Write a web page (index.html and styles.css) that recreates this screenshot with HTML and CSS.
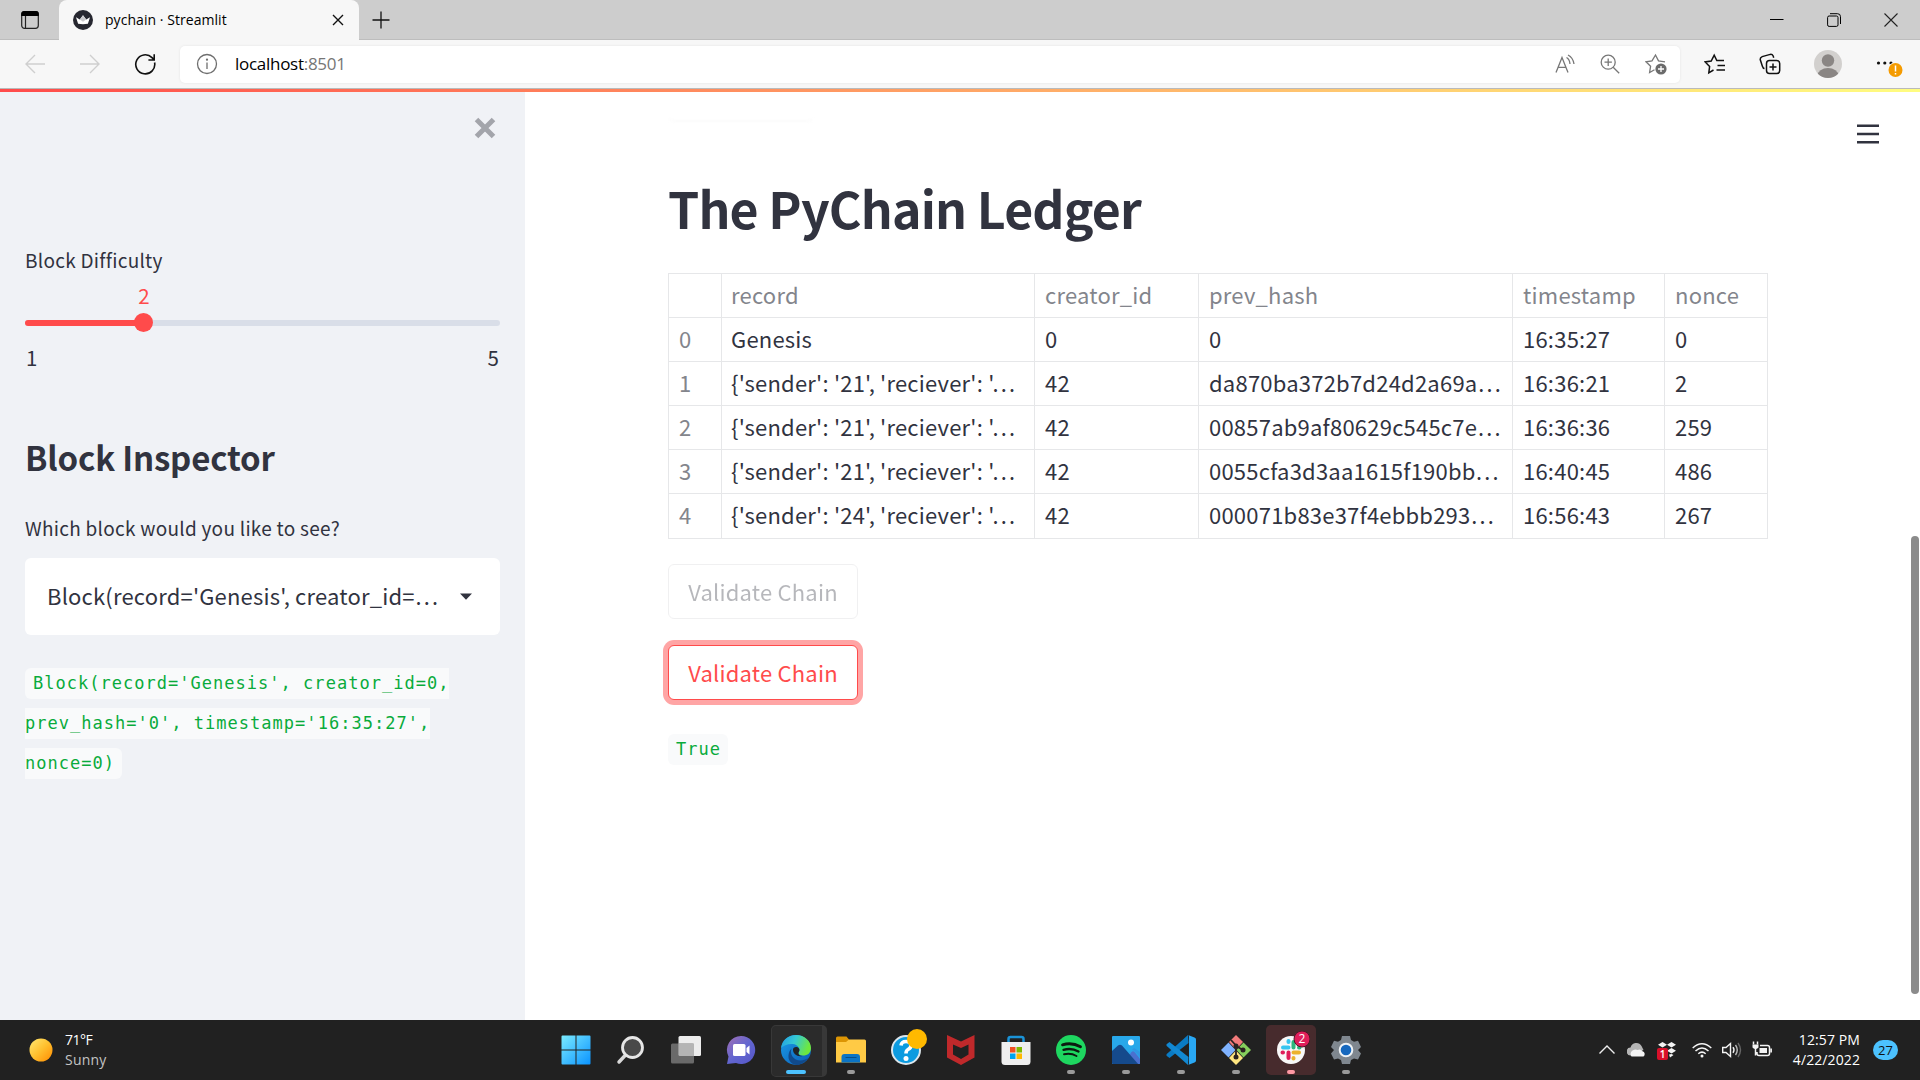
FILE: index.html
```html
<!DOCTYPE html>
<html lang="en">
<head>
<meta charset="utf-8">
<title>pychain · Streamlit</title>
<link rel="stylesheet" href="styles.css">
</head>
<body>
<header class="tabstrip">
  <svg class="tab-actions" width="20" height="20" viewBox="0 0 20 20"><rect x="1.7" y="1.7" width="16.6" height="16.6" rx="2.8" fill="none" stroke="#222" stroke-width="1.2"/><path d="M1.2 6V4a3 3 0 0 1 3-3h11.6a3 3 0 0 1 3 3v2z" fill="#000"/><path d="M5.5 6v12" stroke="#222" stroke-width="1.2"/></svg>
  <div class="tab">
    <svg width="20" height="20" viewBox="0 0 20 20"><circle cx="10" cy="10" r="10" fill="#262730"/><path d="M3 7.2l3.8 2.3L10 5.2l3.200 4.300L17 7.200l-2.100 6.600q-4.900.8-9.800 0z" fill="#fff"/><path d="M6.800 9.500L10 5.200l3.200 4.300-3.200 2.300z" fill="#c9c9cc"/></svg>
    <span class="tab-title">pychain · Streamlit</span>
    <svg width="12" height="12" viewBox="0 0 12 12"><path d="M1 1l10 10M11 1L1 11" stroke="#111" stroke-width="1.4"/></svg>
  </div>
  <svg class="new-tab" width="18" height="18" viewBox="0 0 18 18"><path d="M9 .5v17M.5 9h17" stroke="#111" stroke-width="1.3"/></svg>
  <div class="window-buttons">
    <svg width="14" height="14" viewBox="0 0 14 14"><path d="M0 6.500h13.500" stroke="#000"/></svg>
    <svg width="14" height="14" viewBox="0 0 14 14" fill="none" stroke="#000"><rect x=".6" y="3" width="10.400" height="10.400" rx="1.500"/><path d="M3 .7h7.500a3 3 0 0 1 3 3V11"/></svg>
    <svg width="14" height="14" viewBox="0 0 14 14"><path d="M.5.5l13 13M13.500.5l-13 13" stroke="#222" stroke-width="1.1"/></svg>
  </div>
</header>
<div class="toolbar">
  <div class="nav">
    <svg width="20" height="20" viewBox="0 0 20 20" fill="none" stroke="#cfcfcf" stroke-width="1.400"><path d="M20 10H1M10 1L1 10l9 9"/></svg>
    <svg width="20" height="20" viewBox="0 0 20 20" fill="none" stroke="#cfcfcf" stroke-width="1.400"><path d="M0 10h19M10 1l9 9-9 9"/></svg>
    <svg width="22" height="22" viewBox="0 0 22 22" fill="none" stroke="#111" stroke-width="1.600"><path d="M20.600 9.500A9.500 9.500 0 1 1 18 4.600l2 2M20.200 1.200v5.800h-5.800"/></svg>
  </div>
  <div class="address">
    <svg width="22" height="22" viewBox="0 0 22 22" fill="none" stroke="#6e6e6e" stroke-width="1.300"><circle cx="11" cy="11" r="9.500"/><path d="M11 9.500V16"/><circle cx="11" cy="6.700" r=".5"/></svg>
    <span class="url">localhost<span class="port">:8501</span></span>
    <div class="address-icons">
      <svg width="20" height="20" viewBox="0 0 20 20" fill="none" stroke="#777" stroke-width="1.300"><path d="M1 18.500L7 3.500l6 15M3.100 13.300h7.800M11.500 3.500q3 1.500 3.500 6.500M13 1q5 2.500 6 9"/></svg>
      <svg width="20" height="20" viewBox="0 0 20 20" fill="none" stroke="#777" stroke-width="1.300"><circle cx="8.200" cy="8.200" r="7"/><path d="M13.200 13.200l6 6M8.200 4.500v7.400M4.500 8.200h7.400"/></svg>
      <svg width="22" height="22" viewBox="0 0 22 22" fill="none" stroke="#777" stroke-width="1.300"><path d="M9.500 16.800L4.600 19.500l1-6.300L1 8.800l6-.9L10.500 2l3 5.900 6.500 1"/><circle cx="16" cy="16" r="5.600" fill="#6b6b6b" stroke="none"/><path d="M16 13v6M13 16h6" stroke="#fff"/></svg>
    </div>
  </div>
  <div class="browser-icons">
    <svg width="22" height="22" viewBox="0 0 22 22" fill="none" stroke="#111" stroke-width="1.500"><path d="M9.500 17L4.800 19.800l.8-6.300L1.200 8.900l6-.9L10.200 2.200l2.600 5.400H20M13.500 12.500H21M12.500 17H21"/></svg>
    <svg width="22" height="22" viewBox="0 0 22 22" fill="none" stroke="#111" stroke-width="1.500"><rect x="7.500" y="7.500" width="13.200" height="13" rx="3"/><path d="M14 10.500v7M10.500 14h7M5.500 15.500Q4 15.500 3.300 13L1.200 6.500Q1 4.500 3.200 3.600l8-2.200q2-.4 3 1.600l.5 1.800"/></svg>
    <svg width="28" height="28" viewBox="0 0 28 28"><defs><clipPath id="av"><circle cx="14" cy="14" r="14"/></clipPath></defs><circle cx="14" cy="14" r="14" fill="#d2d0ce"/><g clip-path="url(#av)" fill="#8a8684"><circle cx="14" cy="10.500" r="6.200"/><ellipse cx="14" cy="25.500" rx="10.500" ry="7.500"/></g></svg>
    <svg width="28" height="28" viewBox="0 0 28 28"><g fill="#111"><circle cx="2.500" cy="13" r="1.600"/><circle cx="8.800" cy="13" r="1.600"/><circle cx="15" cy="13" r="1.600"/></g><circle cx="19.500" cy="20" r="7.800" fill="#f7f7f7"/><circle cx="19.500" cy="20" r="7" fill="#f59b00"/><path d="M19.500 15.500v6M19.500 23v1.500" stroke="#fff" stroke-width="1.500"/></svg>
  </div>
</div>
<div class="page">
  <div class="decoration"></div>
  <aside class="sidebar">
    <svg class="sidebar-close" width="22" height="22" viewBox="0 0 22 22"><path d="M2.500 2.500l17 17M19.500 2.500l-17 17" stroke="#a3a5ab" stroke-width="5"/></svg>
    <label class="label slider-label">Block Difficulty</label>
    <div class="slider">
      <div class="slider-value">2</div>
      <div class="track"><div class="fill"></div><div class="thumb"></div></div>
      <div class="ticks"><span>1</span><span>5</span></div>
    </div>
    <h2>Block Inspector</h2>
    <label class="label">Which block would you like to see?</label>
    <div class="select"><span>Block(record='Genesis', creator_id=…</span><svg width="12" height="7" viewBox="0 0 12 7"><path d="M0 .5h12L6 6.800z" fill="#31333f"/></svg></div>
    <p class="code-block"><code>Block(record='Genesis', creator_id=0,<br>prev_hash='0', timestamp='16:35:27',<br>nonce=0)</code></p>
  </aside>
  <main class="main">
    <div class="ghost"></div>
    <svg class="menu" width="22" height="20" viewBox="0 0 22 20"><path d="M0 1.700h22M0 10h22M0 18.300h22" stroke="#31333f" stroke-width="2.500"/></svg>
    <h1>The PyChain Ledger</h1>
    <div class="ledger">
      <div class="row head"><span></span><span>record</span><span>creator_id</span><span>prev_hash</span><span>timestamp</span><span>nonce</span></div>
      <div class="row"><span>0</span><span>Genesis</span><span>0</span><span>0</span><span>16:35:27</span><span>0</span></div>
      <div class="row"><span>1</span><span>{'sender': '21', 'reciever': '…</span><span>42</span><span>da870ba372b7d24d2a69a…</span><span>16:36:21</span><span>2</span></div>
      <div class="row"><span>2</span><span>{'sender': '21', 'reciever': '…</span><span>42</span><span>00857ab9af80629c545c7e…</span><span>16:36:36</span><span>259</span></div>
      <div class="row"><span>3</span><span>{'sender': '21', 'reciever': '…</span><span>42</span><span>0055cfa3d3aa1615f190bb…</span><span>16:40:45</span><span>486</span></div>
      <div class="row"><span>4</span><span>{'sender': '24', 'reciever': '…</span><span>42</span><span>000071b83e37f4ebbb293…</span><span>16:56:43</span><span>267</span></div>
    </div>
    <button class="button stale">Validate Chain</button>
    <button class="button focused">Validate Chain</button>
    <p class="code-block result"><code>True</code></p>
    <div class="scrollbar"></div>
  </main>
</div>
<footer class="taskbar">
  <div class="weather">
    <svg width="24" height="24" viewBox="0 0 24 24"><defs><linearGradient id="sun" x1="0" y1="0" x2="1" y2="1"><stop offset="0" stop-color="#ffe873"/><stop offset=".5" stop-color="#ffc02e"/><stop offset="1" stop-color="#ff8a00"/></linearGradient></defs><circle cx="12" cy="12" r="11.500" fill="url(#sun)"/></svg>
    <div><div class="temp">71°F</div><div class="dim">Sunny</div></div>
  </div>
  <div class="apps">
    <div class="app"><svg width="30" height="30" viewBox="0 0 30 30"><defs><linearGradient id="win" x1="0" y1="0" x2="1" y2="1"><stop offset="0" stop-color="#7bebff"/><stop offset="1" stop-color="#0a93ff"/></linearGradient></defs><path d="M.5 1.500a1 1 0 0 1 1-1h13v14H.5zM15.500.5h13a1 1 0 0 1 1 1v13h-14zM.5 15.500h14v14h-13a1 1 0 0 1-1-1zM15.500 15.500h14v13a1 1 0 0 1-1 1h-13z" fill="url(#win)"/></svg></div>
    <div class="app"><svg width="30" height="30" viewBox="0 0 30 30"><path d="M3 27l7-7.500" stroke="#d8d8d8" stroke-width="3.500" stroke-linecap="round"/><circle cx="16.500" cy="12.500" r="10" fill="#494949" stroke="#e6e6e6" stroke-width="2.800"/></svg></div>
    <div class="app"><svg width="30" height="30" viewBox="0 0 30 30"><rect x="7.500" y="1" width="22.500" height="20" rx="1.500" fill="#ececec"/><rect x="0" y="8.500" width="23" height="20" rx="1.500" fill="#777" fill-opacity=".85"/><path d="M7.500 8.500H23V21H9a1.500 1.500 0 0 1-1.500-1.500z" fill="#b4b4b4"/></svg></div>
    <div class="app"><svg width="30" height="30" viewBox="0 0 30 30"><defs><linearGradient id="chat" x1="0" y1="0" x2="1" y2="1"><stop offset="0" stop-color="#a26fb4"/><stop offset=".5" stop-color="#6266d0"/><stop offset="1" stop-color="#5555c8"/></linearGradient></defs><path d="M15 1a14 14 0 1 1-5 27L1 29l1.500-7.500A14 14 0 0 1 15 1z" fill="url(#chat)"/><rect x="7" y="9" width="12.500" height="12" rx="1.500" fill="#fff"/><path d="M20.500 13l3-2.500v9l-3-2.500z" fill="#fff"/></svg></div>
    <div class="app edge"><svg width="30" height="30" viewBox="0 0 30 30"><defs><linearGradient id="e1" x1="0" y1="0" x2="1" y2=".3"><stop offset="0" stop-color="#219be4"/><stop offset=".5" stop-color="#35c9d4"/><stop offset="1" stop-color="#6ee83e"/></linearGradient><linearGradient id="e2" x1="0" y1="0" x2="1" y2="1"><stop offset="0" stop-color="#1b9de8"/><stop offset="1" stop-color="#0b5bb5"/></linearGradient></defs><circle cx="15" cy="15" r="15" fill="url(#e2)"/><path d="M0 13C1 5 7.500 0 15 0c8.500 0 15 6 15 13 0 5-3.500 7.500-8 7.500-3.500 0-5-1.500-4.500-3 .8-1 1-2 1-3C18 11 14.500 9 10.500 9 6 9 2 11 0 13z" fill="url(#e1)"/><path d="M10.500 13.500c-2 6 2 12 9 12 3 0 5.500-1 7.500-2.500-3 4.500-7.500 7-12 7-5-1-8-5-7.500-9.500.3-3 1.200-5.200 3-7z" fill="#114a8b"/><path d="M12 14.500c0 4.500 4 7.500 9.500 6.500-2.800 0-4.500-1.500-4-3.500 1.500-2 1.200-4-.5-5-2.500-1-5 0-5 2z" fill="#202427"/></svg><b></b></div>
    <div class="app"><svg width="30" height="30" viewBox="0 0 30 30"><path d="M0 3a1.500 1.500 0 0 1 1.500-1.500h9L13 4.500V9H0z" fill="#dc9504"/><path d="M0 7h10l3-2.500h15.500A1.500 1.500 0 0 1 30 6v21.500H0z" fill="#ffca45"/><path d="M5.500 27.500V22a3 3 0 0 1 3-3h12.500a3 3 0 0 1 3 3v5.500z" fill="#0b74c5"/><path d="M9.500 22.500h11" stroke="#064d88"/></svg><b></b></div>
    <div class="app"><svg width="46" height="46" viewBox="-8 -8 46 46"><circle cx="15" cy="15" r="14" fill="#0c9be0" stroke="#dce6ec" stroke-width="2"/><path d="M10 10.500q.5-4 5-4t5 4q0 2.500-3 4-2 1-2 4" fill="none" stroke="#fff" stroke-width="3.600"/><circle cx="15" cy="23.500" r="2.500" fill="#fff"/><circle cx="26" cy="4" r="10" fill="#ffb900"/></svg></div>
    <div class="app"><svg width="30" height="30" viewBox="0 0 30 30"><path d="M1 0l14 6.500L28.500 0v22.500L15 30 1 22.500zM7 9.500v10L15 24l7.500-4.500v-10L15 13z" fill="#c0292b" fill-rule="evenodd"/></svg></div>
    <div class="app"><svg width="30" height="30" viewBox="0 0 30 30"><path d="M7.500 9V4q0-2 2-2h11q2 0 2 2v5" fill="none" stroke="#1a93d8" stroke-width="2.500"/><path d="M.5 7h29v19.500q0 3.500-3.500 3.500H4q-3.500 0-3.500-3.500z" fill="#efefef"/><path d="M9 12h5.500v5.500H9z" fill="#f25022"/><path d="M15.500 12H21v5.500h-5.500z" fill="#7fba00"/><path d="M9 18.500h5.500V24H9z" fill="#00a4ef"/><path d="M15.500 18.500H21V24h-5.500z" fill="#ffb900"/></svg></div>
    <div class="app"><svg width="30" height="30" viewBox="0 0 30 30" fill="none" stroke="#0c1a10" stroke-linecap="round"><circle cx="15" cy="15" r="15" fill="#1ed760" stroke="none"/><path d="M6.500 9.800q9.500-2.800 18 2" stroke-width="2.800"/><path d="M7.500 14.800q8-2.200 15 1.700" stroke-width="2.300"/><path d="M8 19.300q7-1.500 12.500 1.700" stroke-width="1.900"/></svg><b></b></div>
    <div class="app"><svg width="30" height="30" viewBox="0 0 30 30"><defs><clipPath id="ph"><rect x="1" y="1" width="28" height="28" rx="1"/></clipPath></defs><g clip-path="url(#ph)"><path d="M0 0h30v30H0z" fill="#28a8ea"/><path d="M13 30l7-12.500q2-2.500 4 0L30 25v5z" fill="#4a70cf"/><path d="M16 20l3.500-4q2-1.500 4 0l7 8v-6L23 13z" fill="#3e78d8" opacity=".4"/><path d="M0 17l7-6.500q2-1.500 4 0L28 30H0z" fill="#154a8c"/><circle cx="20" cy="7.500" r="3" fill="#fff"/></g></svg><b></b></div>
    <div class="app"><svg width="30" height="30" viewBox="0 0 30 30"><path d="M22.500 8L3.500 23l-3-2.300v-1.500L22 0z" fill="#0a7bc4"/><path d="M22.500 22L3.500 7 .5 9.300v1.500L22 30z" fill="#1288d2"/><path d="M22 0l6.500 2.500q1.500.7 1.500 2v21q0 1.300-1.500 2L22 30q1 0 1-2V2q0-2-1-2z" fill="#29a8f4"/></svg><b></b></div>
    <div class="app"><svg width="30" height="30" viewBox="0 0 30 30"><path d="M15 0l7 7-7 7.500L8 7z" fill="#f27b7b"/><path d="M7.500 7.500l7 7.500-7 7.500L0 15z" fill="#80b3ff"/><path d="M22.500 7.500L30 15l-7.500 7.500-7-7.500z" fill="#86cf5c"/><path d="M15 15.500l7 7.500-7 7-7-7z" fill="#ffe680"/><path d="M10 5l5 5.500V22M15 11l7 4" stroke="#2a2220" stroke-width="1.800" fill="none"/><circle cx="15" cy="11" r="2.500" fill="#2a2220"/><circle cx="22" cy="15" r="2.500" fill="#2a2220"/><circle cx="15" cy="22" r="2.500" fill="#2a2220"/></svg><b></b></div>
    <div class="app slack"><svg width="38" height="38" viewBox="-4 -4 38 38"><circle cx="15" cy="15" r="14" fill="#f8f8f8"/><g stroke-width="4" stroke-linecap="round"><path d="M7 12.500h5.500M12.500 6v1" stroke="#36c5f0"/><path d="M17.500 7v5.500M23 12.500h.5" stroke="#2eb67d"/><path d="M17.500 17.500H23M17.500 23v.5" stroke="#ecb22e"/><path d="M12.500 17.500V23M6.500 17.500H7" stroke="#e01e5a"/></g><circle cx="26" cy="4" r="8" fill="#e01e5a" stroke="#4e1727" stroke-width="1"/></svg><span class="badge">2</span><b></b></div>
    <div class="app"><svg width="30" height="30" viewBox="0 0 30 30"><path d="M11 1h8l1 4 3 1.700 4-1L30 12l-3 3 3 3.500-3 6-4-1L20 25l-1 4h-8l-1-4-3-1.500-4 1-3-6L3 15l-3-3 3-6.300 4 1L10 5z" fill="#7f878f"/><circle cx="15" cy="15" r="6.300" fill="#1668be" stroke="#eef2f5" stroke-width="2"/></svg><b></b></div>
  </div>
  <div class="tray">
    <svg width="20" height="20" viewBox="0 0 20 20"><path d="M2.500 13.500L10 6l7.500 7.500" fill="none" stroke="#eee" stroke-width="1.400"/></svg>
    <svg width="20" height="20" viewBox="0 0 20 20"><path d="M4 15.500a4 4 0 0 1-.5-8A6 6 0 0 1 14.500 6l2 4L6 15.500z" fill="#b5b5b5"/><path d="M4.500 16.500a4 4 0 0 1 1-6q3-1.500 5-.5 3-1.500 5 1.200a3 3 0 0 1 1 5.300z" fill="#f4f4f4"/></svg>
    <div class="dropbox"><svg width="20" height="20" viewBox="0 0 20 20" fill="#f4f4f4"><path d="M5.500 2L10 4.700 5.500 7.500 1 4.700zM14.500 2L19 4.700l-4.500 2.800L10 4.700zM5.500 8L10 10.700l-4.500 2.800L1 10.700zM14.500 8l4.500 2.700-4.500 2.800-4.500-2.800zM12 14.500l2.500-.5 2 1-3.500 2.500z"/></svg><span>1</span></div>
    <svg class="wifi" width="20" height="20" viewBox="0 0 20 20" fill="none" stroke="#f4f4f4" stroke-width="1.500"><path d="M.7 8q9.300-8.500 18.600 0M3.500 11q6.500-6 13 0M6.300 13.800q3.700-3.300 7.400 0"/><circle cx="10" cy="16" r="1.500" fill="#f4f4f4" stroke="none"/></svg>
    <svg width="20" height="20" viewBox="0 0 20 20" fill="none" stroke="#f4f4f4" stroke-width="1.400"><path d="M.7 7.500H4L8.500 3.500v13L4 12.500H.7zM11 7.200q2 2.800 0 5.600"/><path d="M13.500 5q3.500 5 0 10" stroke="#bbb"/><path d="M16 3q5 7 0 14" stroke="#666"/></svg>
    <svg width="20" height="20" viewBox="0 0 20 20" fill="none" stroke="#f4f4f4" stroke-width="1.500"><path d="M8 5.500h7.500q2 0 2 2v6q0 2-2 2H7q-2 0-2-2V12M19.200 8.500v4M1.500 1.500v3M5.500 1.500v3M3.500 8v7.500"/><path d="M.5 4.500h6v3q-3 3-6 0z" fill="#f4f4f4" stroke="none"/><path d="M7.500 8h7.500v5H7.500z" fill="#f4f4f4" stroke="none"/></svg>
    <div class="clock"><div>12:57 PM</div><div>4/22/2022</div></div>
    <div class="count">27</div>
  </div>
</footer>
</body>
</html>
```
FILE: styles.css
```css
* { box-sizing: border-box; }
body { margin: 0; width: 1920px; height: 1080px; overflow: hidden; display: flex; flex-direction: column; font-family: "Open Sans", sans-serif; color: #000; background: #fff; }
svg { display: block; flex: none; }
h1, h2, p { margin: 0; }

.tabstrip { height: 40px; flex: none; display: flex; align-items: center; background: #cdcdcd; border-bottom: 1px solid #bdbdbd; padding-left: 20px; }
.tab { width: 300px; height: 40px; margin: 0 0 -1px 19px; padding: 0 15px 0 14px; display: flex; align-items: center; background: #f7f7f7; border-radius: 8px 8px 0 0; }
.tab-title { flex: 1; margin-left: 12px; font-size: 14px; line-height: 20px; letter-spacing: .05px; }
.new-tab { margin-left: 13px; }
.window-buttons { margin-left: auto; padding-right: 22px; display: flex; gap: 43px; }

.toolbar { height: 49px; flex: none; display: flex; align-items: center; background: #f7f7f7; border-bottom: 1px solid #bababa; padding-left: 25px; }
.nav { width: 155px; display: flex; align-items: center; gap: 34px; }
.nav svg:nth-child(2) { margin-left: 1px; }
.address { width: 1500px; height: 37px; display: flex; align-items: center; background: #fff; border-radius: 5px; box-shadow: 0 0 3px rgba(0,0,0,.08); padding: 0 13px 0 16px; }
.url { margin-left: 17px; font-size: 17px; line-height: 24px; letter-spacing: -.28px; }
.port { color: #767676; }
.address-icons { margin-left: auto; display: flex; align-items: center; gap: 25px; }
.browser-icons { flex: 1; display: flex; align-items: center; padding-left: 24px; gap: 33px; }
.browser-icons svg:nth-child(4) { margin-left: 1px; }

.page { position: relative; height: 931px; flex: none; display: flex; font-family: "Noto Sans CJK SC", sans-serif; color: #31333f; font-size: 22px; letter-spacing: .22px; }
.decoration { position: absolute; z-index: 2; top: 0; left: 0; right: 0; height: 3px; background: linear-gradient(90deg, #ff4b4b, #fffd80); }
.sidebar { width: 525px; flex: none; background: #f0f2f6; padding: 28px 25px 0; display: flex; flex-direction: column; }
.sidebar-close { margin: 0 4px 0 auto; }
.label { font-size: 19px; line-height: 30px; letter-spacing: .27px; }
.slider-label { margin-top: 106px; }
.slider { font-size: 20.500px; letter-spacing: 0; }
.slider-value { width: 238px; height: 30px; margin-top: 5px; line-height: 30px; text-align: center; color: #ff4b4b; }
.track { position: relative; height: 6px; border-radius: 3px; background: #d9dee8; margin-top: 10px; }
.fill { width: 119px; height: 6px; border-radius: 3px; background: #ff4b4b; }
.thumb { position: absolute; left: 109px; top: -7px; width: 19px; height: 19px; border-radius: 50%; background: #ff4b4b; }
.ticks { display: flex; justify-content: space-between; line-height: 30px; margin-top: 16px; padding: 0 1px; }
h2 { font-size: 33px; line-height: 44px; font-weight: 600; letter-spacing: -.18px; margin-top: 63px; }
h2 + .label { margin-top: 34px; }
.select { height: 77px; margin-top: 15px; padding: 0 28px 0 22px; display: flex; align-items: center; justify-content: space-between; background: #fff; border-radius: 6px; white-space: nowrap; letter-spacing: .19px; }
.select span { margin-top: -4px; }
.code-block { margin-top: 28px; font: 17px/40px "DejaVu Sans Mono", monospace; letter-spacing: 1.020px; white-space: nowrap; }
code { font: inherit; color: #09ab3b; background: #f9fafb; padding: 5px 7px 6px 8px; border-radius: 6px; }

.main { position: relative; flex: 1; padding: 76px 0 0 143px; display: flex; flex-direction: column; align-items: flex-start; }
.ghost { position: absolute; left: 143px; top: 0; width: 146px; height: 33px; border-bottom: 2px solid #fbfbfb; border-radius: 0 0 6px 6px; filter: blur(1px); }
.menu { position: absolute; right: 41px; top: 35px; }
h1 { font-size: 50px; line-height: 70px; font-weight: 600; letter-spacing: -.82px; margin-top: 7px; }
.ledger { width: 1100px; height: 266px; margin-top: 31px; border: 1px solid #e6e7e9; display: grid; grid-template-rows: repeat(6, 44px); }
.row { display: grid; grid-template-columns: 53px 313px 164px 314px 152px 1fr; line-height: 41px; white-space: nowrap; }
.row:not(:last-child) { border-bottom: 1px solid #e6e7e9; }
.row span { border-right: 1px solid #e6e7e9; padding-left: 10px; }
.row span:nth-child(2) { padding-left: 9px; }
.row span:last-child { border-right: 0; }
.head, .row span:first-child { color: #83858c; }
.button { width: 190px; height: 55px; padding: 0 0 2px; background: #fff; border: 1px solid #d6d6d9; border-radius: 6px; font: 22px/30px "Noto Sans CJK SC", sans-serif; letter-spacing: .2px; color: #31333f; }
.stale { margin-top: 25px; opacity: .35; }
.focused { margin-top: 26px; border-color: #ff4b4b; color: #ff4b4b; box-shadow: 0 0 0 5px #ffa5a5; }
.result { margin-top: 29px; }
.scrollbar { position: absolute; right: 1px; top: 447px; width: 8px; height: 458px; border-radius: 4px; background: #8b8b8b; }

.taskbar { height: 60px; flex: none; display: grid; grid-template-columns: 548px 825px 1fr; background: #212121; color: #fff; font-size: 14px; line-height: 20px; }
.weather { display: flex; align-items: center; padding: 0 0 0 29px; gap: 12px; }
.temp { letter-spacing: -.5px; }
.dim { color: #c4c4c4; letter-spacing: .2px; }
.apps { display: grid; grid-template-columns: repeat(15, 55px); }
.app { position: relative; height: 60px; display: flex; align-items: center; justify-content: center; }
.app b { position: absolute; left: 24px; top: 50px; width: 8px; height: 4px; border-radius: 2px; background: #9a9a9a; }
.app svg { position: relative; }
.app.edge::before { content: ""; position: absolute; left: 3px; top: 5px; width: 50px; height: 50px; border-radius: 5px; background: #2b2b2b; border: 1px solid #383838; border-right-width: 5px; }
.app.edge b { left: 18px; width: 20px; background: #4cc2ff; }
.slack::before { content: ""; position: absolute; left: 3px; top: 5px; width: 50px; height: 50px; border-radius: 5px; background: #472b2d; }
.app.slack b { background: #ff99a4; }
.badge { position: absolute; left: 31px; top: 9px; width: 16px; text-align: center; font-size: 12px; }
.tray { display: flex; align-items: center; }
.tray > svg:first-child { margin: 0 10px 0 224px; }
.dropbox { position: relative; margin-left: 10px; }
.dropbox span { position: absolute; left: 0; top: 8px; width: 11px; height: 12px; background: #d9102a; border-radius: 2px; font-size: 10px; line-height: 12px; text-align: center; font-weight: 600; }
.wifi { margin-left: 15px; }
.wifi + svg { margin: 0 10px; }
.clock { width: 88px; text-align: right; letter-spacing: .1px; }
.count { width: 25px; height: 20px; margin-left: 13px; border-radius: 10px; background: #4cc2ff; color: #111; font-size: 13px; text-align: center; }
```
